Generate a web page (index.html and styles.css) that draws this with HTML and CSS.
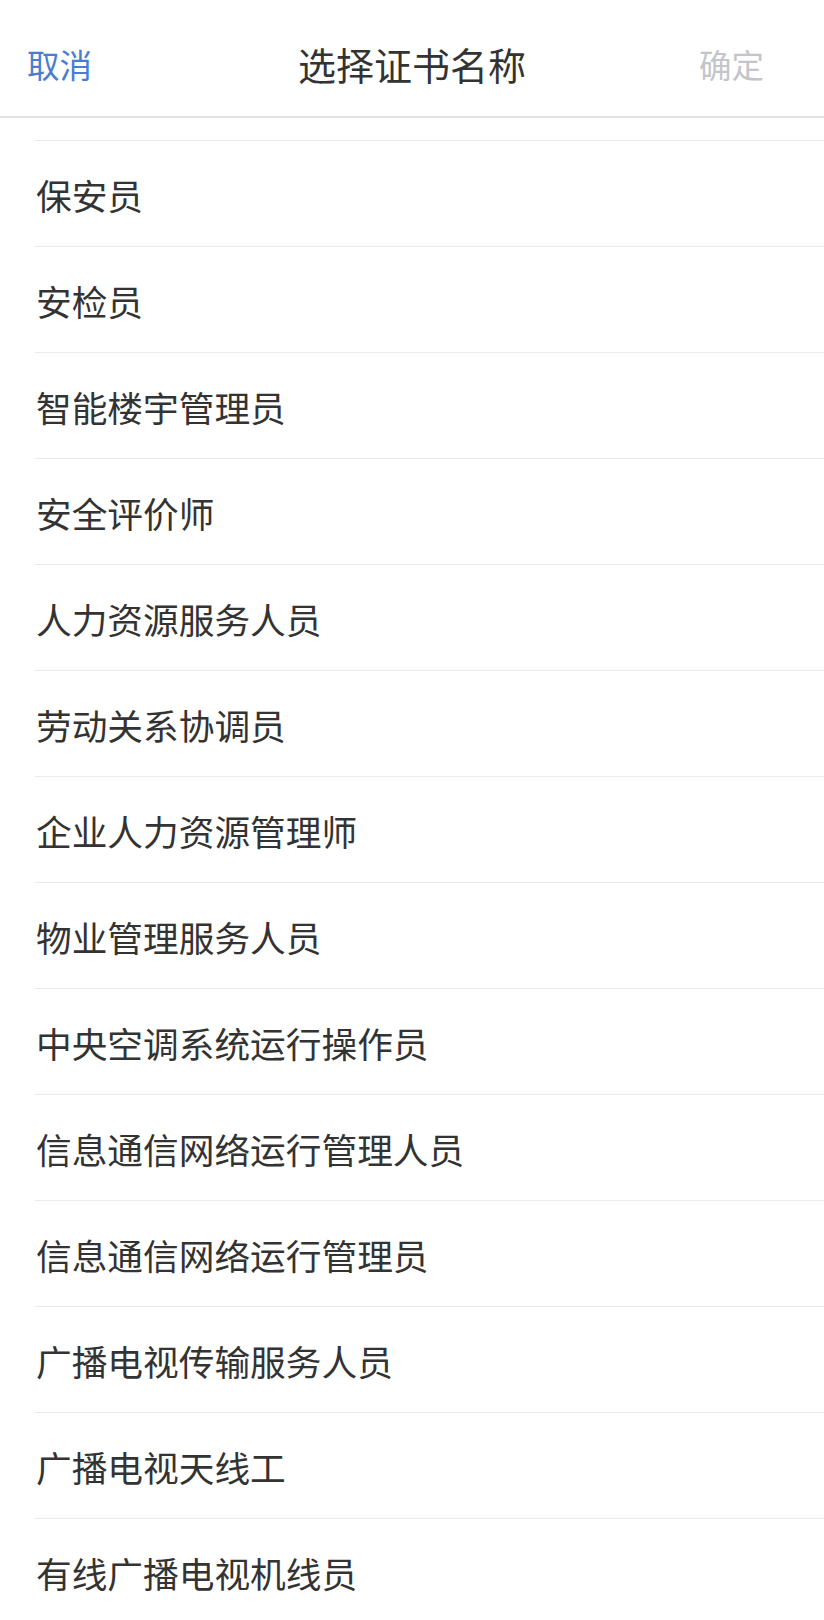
FILE: index.html
```html
<!DOCTYPE html>
<html lang="zh-CN">
<head>
<meta charset="utf-8">
<title>选择证书名称</title>
<link rel="stylesheet" href="styles.css">
</head>
<body>
<div class="page">
  <header class="bar">
    <span class="bar-cancel">取消</span>
    <span class="bar-title">选择证书名称</span>
    <span class="bar-ok">确定</span>
  </header>
  <div class="list">
    <div class="list-gap"></div>
    <div class="item">保安员</div>
    <div class="item">安检员</div>
    <div class="item">智能楼宇管理员</div>
    <div class="item">安全评价师</div>
    <div class="item">人力资源服务人员</div>
    <div class="item">劳动关系协调员</div>
    <div class="item">企业人力资源管理师</div>
    <div class="item">物业管理服务人员</div>
    <div class="item">中央空调系统运行操作员</div>
    <div class="item">信息通信网络运行管理人员</div>
    <div class="item">信息通信网络运行管理员</div>
    <div class="item">广播电视传输服务人员</div>
    <div class="item">广播电视天线工</div>
    <div class="item">有线广播电视机线员</div>
  </div>
</div>
</body>
</html>
```

FILE: styles.css
```css
html, body {
  margin: 0;
  padding: 0;
  background: #ffffff;
}

body {
  font-family: "Noto Sans CJK SC", "Noto Sans", sans-serif;
  width: 824px;
  height: 1620px;
  overflow: hidden;
}

.page {
  display: flex;
  flex-direction: column;
}

.bar {
  height: 114px;
  box-sizing: content-box;
  padding: 2px 27px 0 27px;
  border-bottom: 2px solid #e4e4e6;
  display: grid;
  grid-template-columns: 1fr auto 1fr;
  align-items: center;
}

.bar > span {
  line-height: 1;
  padding-top: 10px;
}

.bar-cancel {
  font-size: 32.5px;
  color: #4a7dd0;
  justify-self: start;
}

.bar-title {
  font-size: 38px;
  color: #333333;
  justify-self: center;
}

.bar-ok {
  font-size: 32.5px;
  color: #c3c5cb;
  justify-self: end;
  margin-right: 33px;
}

.list {
  display: flex;
  flex-direction: column;
  margin-left: 35px;
}

.list-gap {
  height: 22px;
}

.item {
  border-top: 1px solid #ebebeb;
  display: flex;
  align-items: center;
  font-size: 35.7px;
  line-height: 1;
  color: #333333;
  padding-left: 1px;
  padding-top: 2px;
  box-sizing: border-box;
  height: 106px;
}
```
